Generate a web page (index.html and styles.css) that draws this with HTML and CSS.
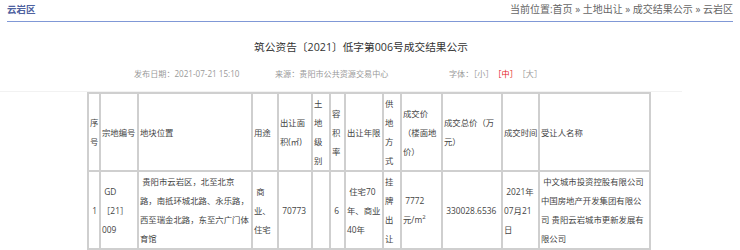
FILE: index.html
```html
<!DOCTYPE html>
<html lang="zh-CN">
<head>
<meta charset="utf-8">
<title>成交结果公示</title>
<link rel="stylesheet" href="styles.css">
</head>
<body>
<div class="top">
  <span class="loc">云岩区</span>
  <span class="crumb">当前位置:首页 » 土地出让 » 成交结果公示 » 云岩区</span>
</div>
<h1 class="title">筑公资告〔2021〕低字第006号成交结果公示</h1>
<div class="meta">
  <span class="m1">发布日期：2021-07-21 15:10</span>
  <span class="m2">来源：贵阳市公共资源交易中心</span>
  <span class="m3">字体：<span class="sz">［小］</span><span class="sz on">［中］</span><span class="sz">［大］</span></span>
</div>
<div class="content">
<table class="grid">
  <tr>
    <th class="c1">序号</th>
    <th class="c2">宗地编号</th>
    <th class="c3">地块位置</th>
    <th class="c4">用途</th>
    <th class="c5">出让面积(㎡)</th>
    <th class="c6">土地级别</th>
    <th class="c7">容积率</th>
    <th class="c8">出让年限</th>
    <th class="c9">供地方式</th>
    <th class="c10">成交价（楼面地价）</th>
    <th class="c11">成交总价（万元）</th>
    <th class="c12">成交时间</th>
    <th class="c13">受让人名称</th>
  </tr>
  <tr>
    <td>&nbsp;1</td>
    <td>&nbsp;GD［21］009</td>
    <td>&nbsp;贵阳市云岩区，北至北京路，南抵环城北路、永乐路，西至瑞金北路，东至六广门体育馆</td>
    <td>&nbsp;商业、住宅</td>
    <td>&nbsp;70773</td>
    <td></td>
    <td>&nbsp;6</td>
    <td>&nbsp;住宅70年、商业40年</td>
    <td>挂牌出让</td>
    <td>&nbsp;7772<br>元/m<sup>2</sup></td>
    <td>&nbsp;330028.6536</td>
    <td>&nbsp;2021年07月21日</td>
    <td>&nbsp;中文城市投资控股有限公司 中国房地产开发集团有限公司 贵阳云岩城市更新发展有限公司</td>
  </tr>
</table>
</div>
</body>
</html>
```
FILE: styles.css
```css
html, body {
  margin: 0;
  padding: 0;
  background: #fff;
}
body {
  font-family: "Open Sans", "Noto Sans CJK SC", sans-serif;
  color: #333;
}
.top {
  margin: 0 7px;
  height: 21px;
  border-bottom: 1px solid #8098d6;
  display: flex;
  justify-content: space-between;
  align-items: flex-start;
  line-height: 19px;
}
.loc {
  font-size: 9.5px;
  font-weight: bold;
  color: #4e62a0;
}
.crumb {
  font-size: 10px;
  color: #666;
}
.title {
  margin: 15px 18px 0 0;
  font-size: 10.7px;
  font-weight: normal;
  line-height: 20px;
  text-align: center;
  color: #333;
}
.meta {
  margin-top: 10px;
  padding-left: 134px;
  display: flex;
  font-size: 8.1px;
  line-height: 14px;
  color: #999;
}
.m1 { width: 141px; }
.m2 { width: 174px; }
.sz { margin-right: 4px; }
.sz.on { color: #e31b1b; }
.content {
  margin: 10px 0 0 0;
  padding-left: 87px;
  width: 595px;
  border-top: 1px solid #f2f2f2;
}
.grid {
  border-collapse: separate;
  border-spacing: 0;
  border: 1px solid #cfcfcf;
  table-layout: fixed;
  width: 564px;
}
.grid th, .grid td {
  box-sizing: border-box;
  border: 1px solid #cfcfcf;
  padding: 0 0 0 1px;
  font-weight: normal;
  text-align: left;
  vertical-align: middle;
  font-size: 8.4px;
  line-height: 19px;
  color: #444;
  word-break: normal;
}
.grid sup {
  font-size: 6px;
  line-height: 0;
}
.c1 { width: 12px; }
.c2 { width: 38px; }
.c3 { width: 114px; }
.c4 { width: 26px; }
.c5 { width: 34px; }
.c6 { width: 18px; }
.c7 { width: 15px; }
.c8 { width: 38px; }
.c9 { width: 18px; }
.c10 { width: 41px; }
.c11 { width: 60px; }
.c12 { width: 37px; }
.c13 { width: 111px; }
```
